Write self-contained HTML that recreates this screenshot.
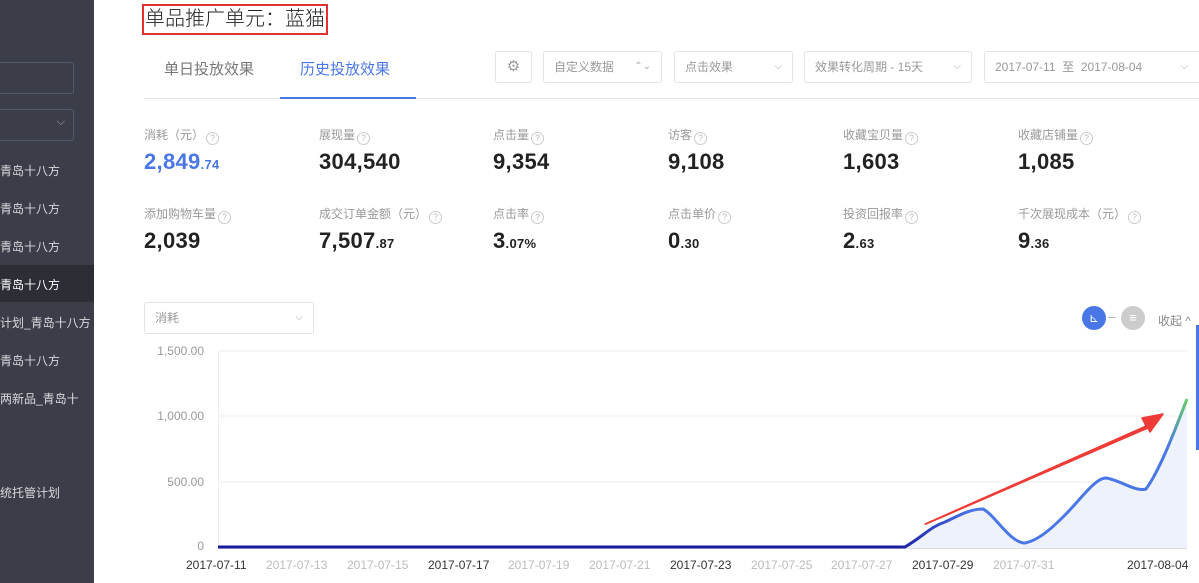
<!DOCTYPE html>
<html><head><meta charset="utf-8"><style>
*{margin:0;padding:0;box-sizing:border-box}
body{width:1199px;height:583px;overflow:hidden;background:#fff;font-family:"Liberation Sans","Noto Sans CJK SC",sans-serif;position:relative;color:#333}
.sb{position:absolute;left:0;top:0;width:94px;height:583px;background:#3b3e49}
.sb .it{position:absolute;left:0;font-size:12px;color:#d8d9dc;white-space:nowrap}
.sbbox{position:absolute;left:-5px;width:79px;height:32px;border:1px solid #555866;border-radius:3px}
.abs{position:absolute;white-space:nowrap}
.title{left:142px;top:4px;border:2px solid #e0322f;font-size:20px;padding:0 1px;height:31px;line-height:27px;color:#222;font-weight:300}
.tab{top:58px;font-size:15px;color:#777}
.sel{position:absolute;top:51px;height:32px;border:1px solid #e3e3e3;border-radius:3px;font-size:12px;color:#999;line-height:30px;padding-left:10px}
.sel .ar{position:absolute;right:10px;top:0;color:#aaa;font-size:10px}
.lab{font-size:12px;color:#999}
.q{display:inline-block;width:13px;height:13px;border:1px solid #ccc;border-radius:50%;font-size:9px;line-height:11px;text-align:center;color:#bbb;vertical-align:-2px;margin-left:2px}
.num{font-size:22px;font-weight:bold;color:#222;letter-spacing:0.3px}
.num small{font-size:13px}
.yl{font-size:12px;color:#999;text-align:right;width:60px}
.xl{font-size:12px;color:#bbb}
.xl.d{color:#333}
</style></head><body>
<div class="sb">
<div class="sbbox" style="top:62px"></div>
<div class="sbbox" style="top:109px"><span style="position:absolute;right:8px;top:6px;color:#aaa;font-size:11px">⌵</span></div>
<div class="it" style="top:162px">青岛十八方</div>
<div class="it" style="top:200px">青岛十八方</div>
<div class="it" style="top:238px">青岛十八方</div>
<div style="position:absolute;left:0;top:265px;width:94px;height:37px;background:#2c2e36"></div>
<div class="it" style="top:276px;color:#fff">青岛十八方</div>
<div class="it" style="top:314px">计划_青岛十八方</div>
<div class="it" style="top:352px">青岛十八方</div>
<div class="it" style="top:390px">两新品_青岛十</div>
<div class="it" style="top:484px">统托管计划</div>
</div>
<div class="abs title">单品推广单元：蓝猫</div>
<div class="abs tab" style="left:164px">单日投放效果</div>
<div class="abs tab" style="left:300px;color:#4a77e6">历史投放效果</div>
<div class="abs" style="left:144px;top:98px;width:1055px;height:1px;background:#e6e6e6"></div>
<div class="abs" style="left:280px;top:97px;width:136px;height:2px;background:#4a77e6"></div>
<div class="sel" style="left:495px;width:37px;padding:0;text-align:center;font-size:15px;color:#999">⚙</div>
<div class="sel" style="left:543px;width:119px">自定义数据<span class="ar">⌃⌄</span></div>
<div class="sel" style="left:674px;width:119px">点击效果<span class="ar">⌵</span></div>
<div class="sel" style="left:804px;width:168px">效果转化周期 - 15天<span class="ar">⌵</span></div>
<div class="sel" style="left:984px;width:230px">2017-07-11 &nbsp;至 &nbsp;2017-08-04<span class="ar" style="right:25px">⌵</span></div>

<div class="abs lab" style="left:144px;top:126px">消耗（元）<span class="q">?</span></div>
<div class="abs num" style="left:144px;top:149px;color:#4a77e6">2,849<small>.74</small></div>
<div class="abs lab" style="left:319px;top:126px">展现量<span class="q">?</span></div>
<div class="abs num" style="left:319px;top:149px">304,540</div>
<div class="abs lab" style="left:493px;top:126px">点击量<span class="q">?</span></div>
<div class="abs num" style="left:493px;top:149px">9,354</div>
<div class="abs lab" style="left:668px;top:126px">访客<span class="q">?</span></div>
<div class="abs num" style="left:668px;top:149px">9,108</div>
<div class="abs lab" style="left:843px;top:126px">收藏宝贝量<span class="q">?</span></div>
<div class="abs num" style="left:843px;top:149px">1,603</div>
<div class="abs lab" style="left:1018px;top:126px">收藏店铺量<span class="q">?</span></div>
<div class="abs num" style="left:1018px;top:149px">1,085</div>

<div class="abs lab" style="left:144px;top:205px">添加购物车量<span class="q">?</span></div>
<div class="abs num" style="left:144px;top:228px">2,039</div>
<div class="abs lab" style="left:319px;top:205px">成交订单金额（元）<span class="q">?</span></div>
<div class="abs num" style="left:319px;top:228px">7,507<small>.87</small></div>
<div class="abs lab" style="left:493px;top:205px">点击率<span class="q">?</span></div>
<div class="abs num" style="left:493px;top:228px">3<small>.07%</small></div>
<div class="abs lab" style="left:668px;top:205px">点击单价<span class="q">?</span></div>
<div class="abs num" style="left:668px;top:228px">0<small>.30</small></div>
<div class="abs lab" style="left:843px;top:205px">投资回报率<span class="q">?</span></div>
<div class="abs num" style="left:843px;top:228px">2<small>.63</small></div>
<div class="abs lab" style="left:1018px;top:205px">千次展现成本（元）<span class="q">?</span></div>
<div class="abs num" style="left:1018px;top:228px">9<small>.36</small></div>

<div class="sel" style="left:144px;top:302px;width:170px">消耗<span class="ar">⌵</span></div>
<div class="abs" style="left:1082px;top:306px;width:24px;height:24px;border-radius:50%;background:#4a77e6;color:#fff;font-size:12px;text-align:center;line-height:24px">⊾</div>
<div class="abs" style="left:1108px;top:317px;width:8px;height:1px;background:#bbb"></div>
<div class="abs" style="left:1121px;top:306px;width:24px;height:24px;border-radius:50%;background:#ccc;color:#fff;font-size:13px;text-align:center;line-height:24px">≡</div>
<div class="abs" style="left:1158px;top:312px;font-size:12px;color:#888">收起 ^</div>
<div class="abs" style="left:1196px;top:325px;width:3px;height:125px;background:#4a77e6"></div>

<div class="abs yl" style="left:144px;top:344px">1,500.00</div>
<div class="abs yl" style="left:144px;top:409px">1,000.00</div>
<div class="abs yl" style="left:144px;top:475px">500.00</div>
<div class="abs yl" style="left:144px;top:539px">0</div>
<svg class="abs" style="left:0;top:0" width="1199" height="583">
<defs><linearGradient id="g" x1="0" x2="1"><stop offset="0.7" stop-color="#1a1aa0"/><stop offset="0.78" stop-color="#4a77e6"/><stop offset="0.98" stop-color="#4a77e6"/><stop offset="1" stop-color="#6c6"/></linearGradient></defs>
<g stroke="#eee" stroke-width="1"><line x1="218" y1="351" x2="1187" y2="351"/><line x1="218" y1="416" x2="1187" y2="416"/><line x1="218" y1="482" x2="1187" y2="482"/><line x1="218.5" y1="351" x2="218.5" y2="548"/></g>
<path d="M905,547 C925,535 930,527 945,522 C960,515 970,509 983,509 C995,515 1010,543 1025,543 C1040,540 1055,525 1065,515 C1080,500 1095,478 1106,478 C1120,480 1135,492 1146,489 C1160,470 1175,430 1187,399 L1187,548 L905,548Z" fill="#eef2fc"/>
<line x1="218" y1="548.5" x2="1187" y2="548.5" stroke="#ddd"/>
<path d="M218,547 L905,547 C925,535 930,527 945,522 C960,515 970,509 983,509 C995,515 1010,543 1025,543 C1040,540 1055,525 1065,515 C1080,500 1095,478 1106,478 C1120,480 1135,492 1146,489 C1160,470 1175,430 1187,399" fill="none" stroke="url(#g)" stroke-width="3"/>
<path d="M925,524 L1146,426 L1142,418 L1163,414 L1150,432 L1148,428 L926,524Z" fill="#ef3b36" stroke="#ef3b36" stroke-width="1.5" stroke-linejoin="round"/>
</svg>
<div class="abs xl d" style="left:186px;top:558px">2017-07-11</div>
<div class="abs xl" style="left:266px;top:558px">2017-07-13</div>
<div class="abs xl" style="left:347px;top:558px">2017-07-15</div>
<div class="abs xl d" style="left:428px;top:558px">2017-07-17</div>
<div class="abs xl" style="left:508px;top:558px">2017-07-19</div>
<div class="abs xl" style="left:589px;top:558px">2017-07-21</div>
<div class="abs xl d" style="left:670px;top:558px">2017-07-23</div>
<div class="abs xl" style="left:751px;top:558px">2017-07-25</div>
<div class="abs xl" style="left:831px;top:558px">2017-07-27</div>
<div class="abs xl d" style="left:912px;top:558px">2017-07-29</div>
<div class="abs xl" style="left:993px;top:558px">2017-07-31</div>
<div class="abs xl d" style="left:1127px;top:558px">2017-08-04</div>
</body></html>
